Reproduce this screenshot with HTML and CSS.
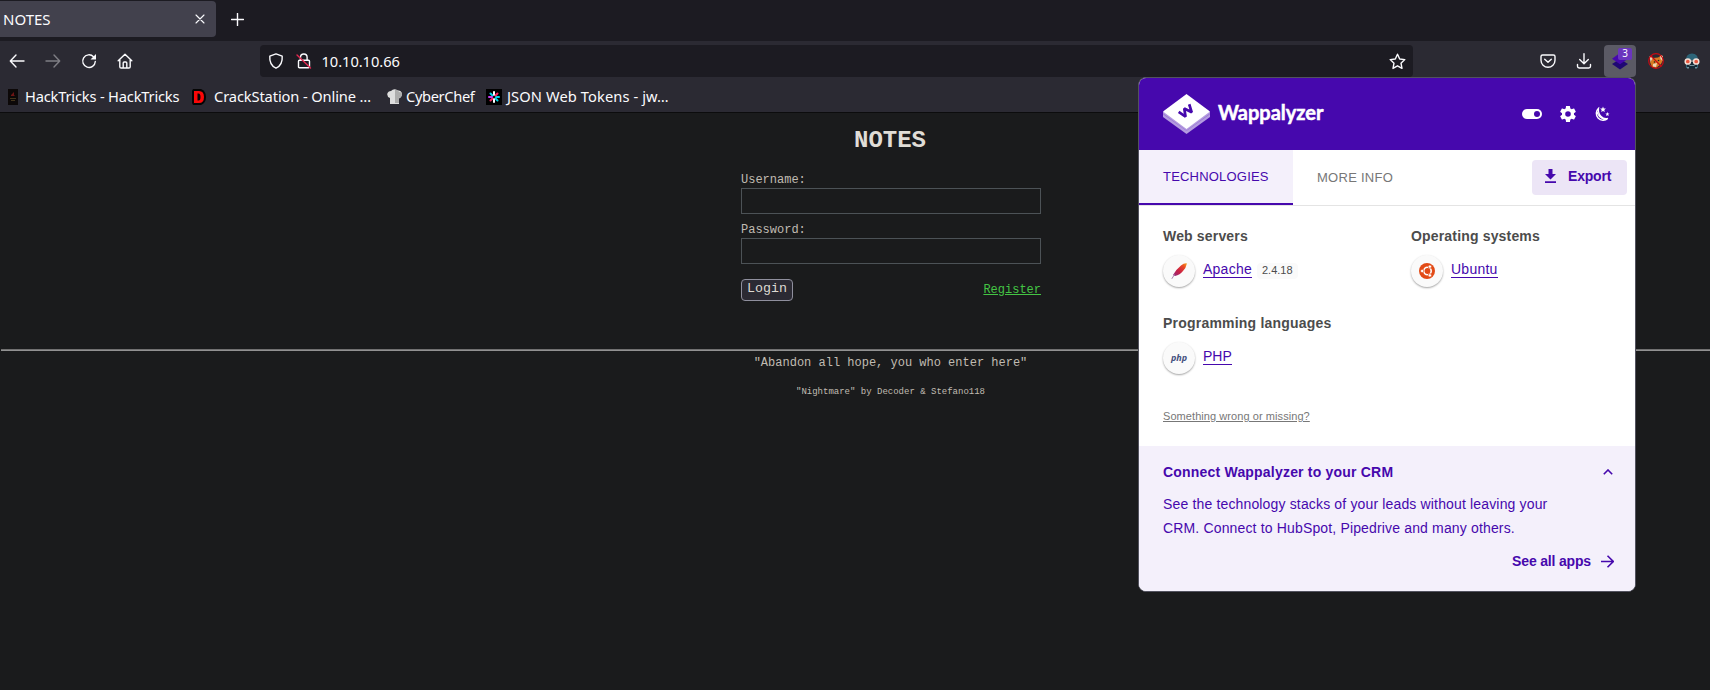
FILE: index.html
```html
<!DOCTYPE html>
<html lang="en">
<head>
<meta charset="utf-8">
<title>NOTES</title>
<link rel="stylesheet" href="styles.css">
</head>
<body>
<header class="chrome">
  <div class="tabbar">
    <div class="tab"><span>NOTES</span>
      <svg width="10" height="10" viewBox="0 0 10 10"><path d="M1 1l8 8M9 1L1 9"/></svg>
    </div>
    <svg class="newtab" width="13" height="13" viewBox="0 0 13 13"><path d="M6.500 .5v12M.5 6.500h12"/></svg>
  </div>
  <div class="toolbar">
    <div class="nav">
      <svg width="16" height="16" viewBox="0 0 16 16"><path d="M15 8H1.500M7 2L1.300 8 7 14"/></svg>
      <svg class="dim" width="16" height="16" viewBox="0 0 16 16"><path d="M1 8h13.500M9 2l5.700 6L9 14"/></svg>
      <svg width="16" height="16" viewBox="0 0 16 16"><path d="M14.300 8.500A6.300 6.300 0 1 1 12.500 3.700"/><path class="solid" d="M15 1v5.500H9.500z"/></svg>
      <svg width="16" height="16" viewBox="0 0 16 16"><path d="M1.200 7.800L8 1.200l6.800 6.600M2.800 6.500v7.200q0 1.300 1.300 1.300h7.800q1.300 0 1.300-1.300V6.500M6.200 14.800V10q0-1 1-1h1.600q1 0 1 1v4.800"/></svg>
    </div>
    <div class="urlbar">
      <svg width="16" height="16" viewBox="0 0 16 16"><path d="M8 .9l6.200 2.300c.4 5.300-1 9.500-6.200 12C2.800 12.700 1.400 8.500 1.800 3.200z"/></svg>
      <svg width="16" height="16" viewBox="0 0 16 16"><path d="M4.500 7.300V4.300a3.300 3.300 0 0 1 6.600 0v3M3.500 7.300h9q1 0 1 1v5.500q0 1-1 1h-9q-1 0-1-1V8.300q0-1 1-1z"/><path class="red" d="M1 2l13.500 13"/></svg>
      <span class="url">10.10.10.66</span>
      <svg class="star" width="17" height="17" viewBox="0 0 17 17"><path d="M8.500 1.200l2.200 4.800 5.100.6-3.800 3.600 1 5.200-4.500-2.600L4 15.400l1-5.200-3.800-3.600L6.300 6z"/></svg>
    </div>
    <div class="actions">
      <svg width="16" height="16" viewBox="0 0 16 16"><path d="M2.600 2h10.800q1.600 0 1.600 1.600v3.600a7 7 0 0 1-14 0V3.600Q1 2 2.600 2zM4.700 6.200L8 9.300l3.300-3.100"/></svg>
      <svg width="16" height="16" viewBox="0 0 16 16"><path d="M8 .8v9.700M3.700 6.500L8 10.700l4.300-4.200M1.500 11.500v1.800q0 1.700 1.700 1.700h9.600q1.700 0 1.700-1.700v-1.800"/></svg>
      <span class="extbtn">
        <svg width="18" height="17" viewBox="0 0 18 17"><path d="M9 6l8 5-8 5.500L1 11z" fill="#1f0873"/><path d="M9 0l8 5.800-8 5.400L1 5.800z" fill="#4608ad"/></svg>
        <span class="count">3</span>
      </span>
      <svg class="fill" width="16" height="16" viewBox="0 0 16 16"><path fill="#d87b22" d="M2 9l3-4 5-.5L14 2l1 5-2 4-5 4-4-1z"/><path fill="#eed4b5" d="M1.500 3l3.500 2-2.500 4zM12 2l3 1-.5 5-2-2zM5 11l4-1-1 4-3-.5z"/><circle cx="6.500" cy="9" r=".8" fill="#222"/><circle cx="10.500" cy="7.500" r=".8" fill="#222"/><g fill="none" stroke="#c80a12" stroke-width="1.200"><circle cx="8" cy="8" r="7.300"/><path d="M3 3l10 10"/></g></svg>
      <svg class="fill" width="16" height="16" viewBox="0 0 16 16"><path fill="#2d6478" d="M2 7q0-6.500 6-6.500T14 7v8H2z"/><path fill="#172a36" d="M3 7h10v8.500H3z"/><path fill="#74929c" d="M5.500 12h5v1h-5zM3 14h2v1.500H3zM11 14h2v1.500h-2z"/><g fill="#e8553d" stroke="#f3dfd6" stroke-width="1.500"><circle cx="3.800" cy="8.500" r="2.600"/><circle cx="12.200" cy="8.500" r="2.600"/></g><path fill="#f3dfd6" d="M6 7.500h4v1H6z"/></svg>
    </div>
  </div>
  <div class="bookmarks">
    <a class="bm b1"><svg width="10" height="16" viewBox="0 0 10 16"><path fill="#0c0808" d="M0 0h10v16H0z"/><path fill="#6d1414" d="M3 6l3-3v3l1 1H3z"/><path fill="#44351c" d="M2 9h6v1H2zM3 11h4v1H3z"/></svg><span>HackTricks - HackTricks</span></a>
    <a class="bm b2"><svg width="14" height="16" viewBox="0 0 14 16"><path fill="#050505" d="M1 0h8q5 2 5 8t-5 8H1l-1-2V2z"/><path fill="#fb0707" fill-rule="evenodd" d="M2 2h5q5 0 5 6t-5 6H2zM5.500 4.500v7h1q2 0 2-3.500t-2-3.500z"/></svg><span>CrackStation - Online …</span></a>
    <a class="bm b3"><svg width="15" height="16" viewBox="0 0 15 16"><path fill="#dedede" d="M3 9Q0 8 .2 5 1 2 4 2q3-3 6.500-.5Q14 1 15 4.500 15 8 12 9.500V15H3z"/><path fill="#adadad" d="M8 1q3-1 4 2 3 0 3 2 0 3-3 4v5H8z"/></svg><span>CyberChef</span></a>
    <a class="bm b4"><svg width="16" height="16" viewBox="0 0 16 16"><path fill="#000" d="M0 0h16v16H0z"/><g fill="none" stroke-width="2"><path stroke="#fff" d="M8 3v3M8 10v3"/><path stroke="#00d5e8" d="M4.500 4.500l2 2M9.500 9.500l2 2M10 8h3"/><path stroke="#fb2660" d="M11.500 4.500l-2 2M6.500 9.500l-2 2"/><path stroke="#c53bf0" d="M3 8h3"/></g></svg><span>JSON Web Tokens - jw…</span></a>
  </div>
</header>

<main class="page">
  <form class="login">
    <h1>NOTES</h1>
    <label>Username:</label>
    <input type="text">
    <label>Password:</label>
    <input type="password">
    <div class="row"><button type="button">Login</button><a class="register">Register</a></div>
  </form>
  <div class="rule"></div>
  <p class="quote">"Abandon all hope, you who enter here"</p>
  <p class="credit">"Nightmare" by Decoder &amp; Stefano118</p>
</main>

<aside class="popup">
  <div class="pop-head">
    <svg width="47" height="40" viewBox="0 0 47 40"><path fill="#b49be0" d="M0 18h47v5L23.500 40 0 23z"/><path fill="#4608ad" d="M0 19.300L23.500 36.500 47 19.300v1L23.500 37 0 20.300z" opacity=".25"/><path fill="#fff" d="M23.500 0L47 17.500 23.500 35 0 17.500z"/><path fill="none" stroke="#4608ad" stroke-width="3" d="M16 18l7.300 4.300-1.800-6.300 6.500 2.700-3.200-7" transform="translate(0 0)" visibility="hidden"/><path fill="none" stroke="#4608ad" stroke-width="2.700" stroke-linejoin="bevel" d="M-6.500-4l2.700 8L0-3.500 3.800 4l2.700-8" transform="translate(23.300 17.300) rotate(-36)"/></svg>
    <span class="brand">Wappalyzer</span>
    <div class="pop-tools">
      <svg width="20" height="10" viewBox="0 0 20 10"><rect width="20" height="10" rx="5" fill="#fff"/><circle cx="15" cy="5" r="3" fill="#4608ad"/></svg>
      <svg width="16" height="16" viewBox="2 2 20 20"><path fill="#fff" d="M12 15.500A3.500 3.500 0 0 1 8.500 12 3.500 3.500 0 0 1 12 8.500a3.500 3.500 0 0 1 3.500 3.500 3.500 3.500 0 0 1-3.500 3.500m7.430-2.530c.04-.32.07-.64.07-.97s-.03-.66-.07-1l2.110-1.630c.19-.15.24-.42.12-.64l-2-3.460c-.12-.22-.39-.31-.61-.22l-2.490 1c-.52-.39-1.060-.73-1.690-.98l-.37-2.650A.506.506 0 0 0 14 2h-4c-.25 0-.46.180-.5.420l-.37 2.650c-.63.25-1.170.59-1.690.98l-2.490-1c-.22-.09-.49 0-.61.220l-2 3.460c-.13.220-.07.490.120.640L4.570 11c-.04.340-.07.670-.07 1s.030.650.070.970l-2.110 1.660c-.19.150-.25.420-.120.640l2 3.460c.120.220.390.300.610.220l2.490-1.010c.520.400 1.060.740 1.690.990l.370 2.650c.040.240.250.420.500.420h4c.250 0 .460-.18.500-.42l.370-2.650c.630-.26 1.170-.59 1.690-.99l2.490 1.010c.220.080.490 0 .610-.22l2-3.460c.120-.22.070-.49-.12-.64z"/></svg>
      <svg width="16" height="16" viewBox="1.500 .5 16 16"><path fill="none" stroke="#fff" stroke-width="1.300" d="M6 2.800A6.300 6.300 0 1 0 15.300 13C10 14.300 5.200 9 6 2.800zM4.500 6Q5.500 12 12.500 14.200"/><path fill="#fff" d="M10.500 1l.8 2 2.100.1-1.600 1.400.5 2.100-1.800-1.100-1.800 1.100.5-2.100-1.600-1.400L9.700 3zM14.900 6.500l.6 1.400 1.500.1-1.200 1 .4 1.500-1.300-.8-1.300.8.4-1.500-1.200-1 1.500-.1z"/></svg>
    </div>
  </div>
  <div class="pop-tabs">
    <span class="ptab on">TECHNOLOGIES</span>
    <span class="ptab off">MORE INFO</span>
    <span class="export"><svg width="11" height="14" viewBox="0 0 11 14"><path fill="#4608ad" d="M3.500 0h4v5H11l-5.500 5.500L0 5h3.500zM0 12.200h11V14H0z"/></svg>Export</span>
  </div>
  <div class="techs">
    <section>
      <h2>Web servers</h2>
      <div class="tech"><i class="disc"><svg width="16" height="16" viewBox="0 0 16 16"><defs><linearGradient id="f" x1="1" y1="0" x2="0" y2="1"><stop offset="0" stop-color="#f7a51c"/><stop offset=".25" stop-color="#ea4a25"/><stop offset=".6" stop-color="#c92046"/><stop offset="1" stop-color="#8c2a80"/></linearGradient></defs><path fill="url(#f)" d="M15.900.4Q13 0 10 2.500 5 6.500 2 12l2 1q5-1 8-5 3-3 3.900-7.600z"/><path stroke="#a883b0" d="M3.500 11.500L.8 15.800"/></svg></i><a>Apache</a><small>2.4.18</small></div>
    </section>
    <section>
      <h2>Operating systems</h2>
      <div class="tech"><i class="disc"><svg width="16" height="16" viewBox="0 0 16 16"><circle cx="8" cy="8" r="8" fill="#e24a16"/><circle cx="8.500" cy="8" r="3.700" fill="none" stroke="#fff" stroke-width="1.600"/><g fill="#fff" stroke="#e24a16" stroke-width=".7"><circle cx="3.200" cy="8" r="1.700"/><circle cx="10.900" cy="3.600" r="1.700"/><circle cx="10.900" cy="12.400" r="1.700"/></g></svg></i><a>Ubuntu</a></div>
    </section>
    <section>
      <h2 class="h-lang">Programming languages</h2>
      <div class="tech"><i class="disc php">php</i><a class="tight">PHP</a></div>
    </section>
  </div>
  <a class="wrong">Something wrong or missing?</a>
  <div class="crm">
    <div class="crm-title"><span>Connect Wappalyzer to your CRM</span><svg width="10" height="6" viewBox="0 0 10 6"><path d="M.8 5.200L5 1l4.200 4.200"/></svg></div>
    <p>See the technology stacks of your leads without leaving your<br>CRM. Connect to HubSpot, Pipedrive and many others.</p>
    <div class="all"><span>See all apps</span><svg width="13" height="13" viewBox="0 0 13 13"><path d="M0 6.500h12M6.500 .7l5.800 5.800-5.800 5.800"/></svg></div>
  </div>
</aside>
</body>
</html>
```
FILE: styles.css
```css
* { box-sizing: border-box; }
body { margin: 0; height: 690px; overflow: hidden; background: #1a1b1c; position: relative; }
svg { display: block; flex: none; }

/* browser chrome */
.chrome { font: 14.67px/20px "Noto Sans", sans-serif; color: #fbfbfe; background: #2b2a33; border-bottom: 1px solid #0c0c0d; height: 113px; }
.chrome svg { fill: none; stroke: #fbfbfe; stroke-width: 1.4; stroke-linecap: round; stroke-linejoin: round; }
.chrome .fill, .chrome .bm svg, .chrome .extbtn svg { stroke: none; }
.chrome .solid { fill: #fbfbfe; stroke: none; }
.chrome .red { stroke: #e22850; }
.tabbar { height: 41px; background: #1c1b22; display: flex; align-items: flex-start; padding-top: 1px; }
.tab { width: 216px; height: 36px; background: #42414d; border-radius: 0 4px 4px 0; display: flex; align-items: center; justify-content: space-between; padding: 0 11px 0 3px; font-size: 15px; }
.chrome .tab svg { stroke-width: 1.1; }
.newtab { margin: 12px 0 0 15px; }
.toolbar { height: 38px; display: flex; align-items: flex-start; padding: 2px 10px 0 9px; }
.nav { display: flex; gap: 20px; width: 251px; padding-top: 10px; }
.dim { opacity: .4; }
.urlbar { margin-top: 2px; width: 1153px; height: 32px; border-radius: 4px; background: #1c1b22; display: flex; align-items: center; padding: 0 7px 0 8px; gap: 12px; }
.url { margin-left: -2.5px; flex: 1; letter-spacing: -.05px; }
.actions { flex: 1; display: flex; align-items: center; justify-content: flex-end; gap: 20px; margin: 2px 0 0; height: 32px; }
.extbtn { position: relative; width: 32px; height: 32px; margin: 0 -8px; border-radius: 4px; background: #5b5a65; display: flex; align-items: center; justify-content: center; }
.count { position: absolute; left: 14px; top: 3px; width: 14px; height: 12px; background: #6a35be; border-radius: 2px; font-size: 10px; line-height: 11px; text-align: center; }
.bookmarks { height: 33px; display: flex; align-items: center; padding: 3px 0 0 8px; }
.bm { display: flex; align-items: center; }
.bm span { white-space: nowrap; line-height: 20px; margin-top: -2px; }
.b1 { gap: 7px; width: 184px; letter-spacing: -.18px; }
.b2 { gap: 8px; width: 195px; letter-spacing: -.12px; }
.b3 { gap: 4px; width: 99px; letter-spacing: -.35px; }
.b4 { gap: 5px; letter-spacing: .1px; }

/* login page */
.page { font: 12px/14px "Liberation Mono", monospace; color: #c0bbb2; }
.login { width: 300px; margin: 0 0 0 741px; padding-top: 14px; display: flex; flex-direction: column; }
.login h1 { margin: 0 0 18px; font-size: 24px; line-height: 28px; text-align: center; color: #e0ddd6; padding-right: 2px; }
.login label { height: 15px; }
.login input { height: 26px; border: 1px solid #4c5256; background: transparent; margin: 0 0 9px; padding: 0; }
.row { display: flex; justify-content: space-between; margin-top: 6px; height: 22px; }
.row button { width: 52px; height: 22px; padding: 0 0 2px; border: 1px solid #8f8f9d; border-radius: 4px; background: #2b2a33; color: #dcd9d2; font: 13.33px/16px "Liberation Mono", monospace; text-align: center; }
.register { color: #44c544; text-decoration: underline; padding-top: 4px; }
.rule { height: 2px; margin: 48px 0 0 1px; background: #707070; border-bottom: 1px solid #929292; }
.quote, .credit { margin: 5px 0 0; padding-left: 71px; width: 1710px; text-align: center; }
.credit { margin-top: 16px; font-size: 9px; line-height: 12px; }

/* extension popup, floating over the page */
.popup { position: absolute; left: 1138px; top: 77px; width: 498px; height: 515px; border: 1px solid #52525e; border-radius: 8px; overflow: hidden; background: #fff; font: 14px/20px "Liberation Sans", Arial, sans-serif; color: #4608ad; }
.pop-head { height: 72px; background: #4608ad; display: flex; align-items: center; padding: 0 25px 0 24px; }
.brand { font: 700 20px/24px Lato, sans-serif; color: #fff; margin: -5px 0 0 8px; -webkit-text-stroke: .5px #fff; }
.pop-tools { margin-left: auto; display: flex; align-items: center; gap: 18px; }
.pop-tabs { height: 56px; border-bottom: 1px solid #e4e4e4; display: flex; }
.ptab { font-size: 13px; }
.on { width: 154px; height: 55px; background: #f4f0fb; border-bottom: 2px solid #4608ad; padding: 17px 0 0 24px; letter-spacing: .2px; }
.off { color: #777; padding: 18px 0 0 24px; letter-spacing: .27px; }
.export { margin: 10px 8px 0 auto; width: 95px; height: 35px; border-radius: 4px; background: #ece5f6; display: flex; align-items: center; gap: 12px; padding: 0 0 4px 13px; font-weight: 700; letter-spacing: -.2px; }
.techs { display: grid; grid-template-columns: 248px 1fr; grid-auto-rows: 87px; padding: 20px 0 0 24px; height: 201px; }
.techs h2 { margin: 0; font-size: 14px; line-height: 20px; color: #4c4c4c; letter-spacing: .17px; }
.techs .h-lang { letter-spacing: .21px; }
.tech { display: flex; align-items: center; height: 32px; margin-top: 9px; }
.disc { width: 32px; height: 32px; border-radius: 50%; background: #fafafa; box-shadow: 0 1px 2px rgba(0,0,0,.36); display: flex; align-items: center; justify-content: center; margin-right: 8px; }
.php { font: italic 700 9px/10px "Open Sans", sans-serif; color: #45517f; }
.tech a { line-height: 15px; border-bottom: 1px solid #4608ad; letter-spacing: .25px; margin-top: -3px; }
.tech a.tight { letter-spacing: 0; }
.tech small { margin: -1px 0 0 5px; height: 16px; width: 41px; border-radius: 4px; background: #fafafa; color: #4c4c4c; font-size: 11px; line-height: 15px; padding-left: 5px; }
.wrong { display: block; margin: 0 0 0 24px; height: 39px; font-size: 11px; line-height: 18px; letter-spacing: .07px; color: #777; text-decoration: underline; }
.crm { height: 145px; background: #f4f0fb; padding: 16px 20px 0 24px; }
.crm svg { fill: none; stroke: #4608ad; stroke-width: 1.6; }
.crm-title { display: flex; justify-content: space-between; align-items: center; font-weight: 700; letter-spacing: .2px; padding-right: 2px; }
.crm p { margin: 10px 0 0; line-height: 24px; letter-spacing: .155px; }
.all { display: flex; justify-content: flex-end; align-items: center; gap: 10px; margin-top: 11px; padding-right: 1px; font-weight: 700; letter-spacing: -.17px; }
```
